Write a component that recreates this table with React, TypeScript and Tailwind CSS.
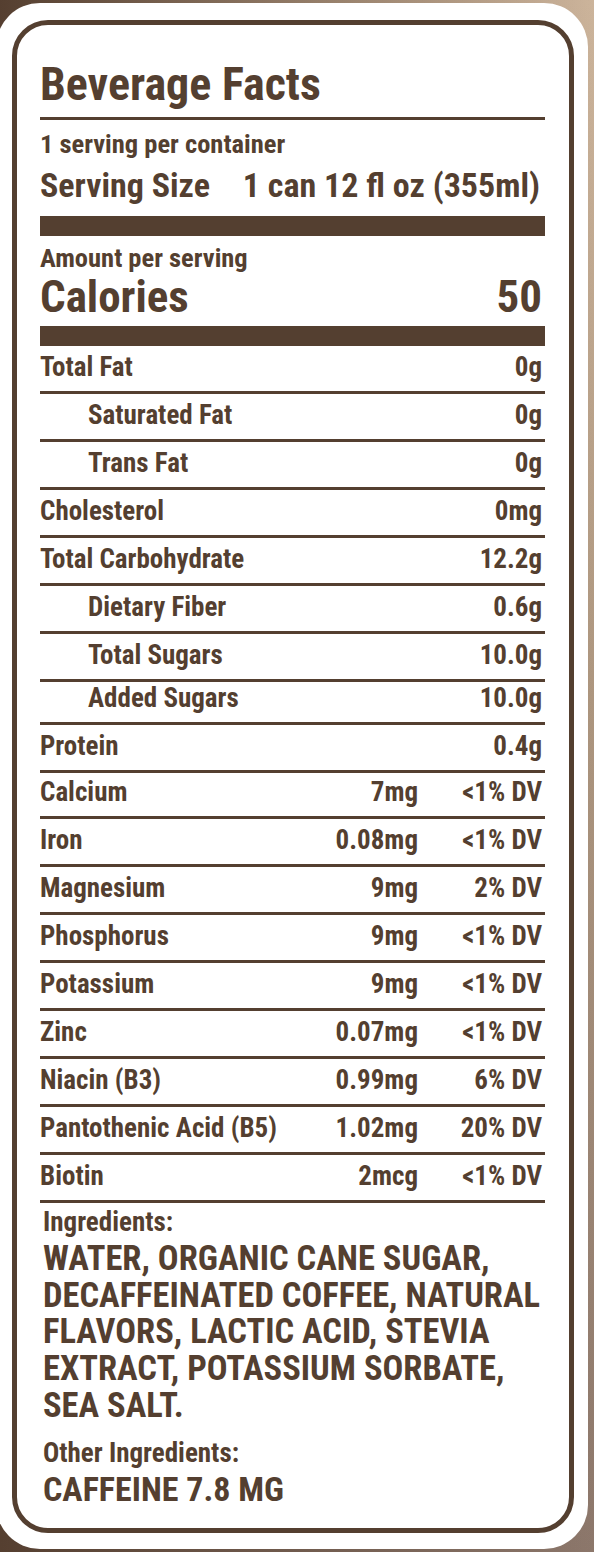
type Row = { label: string; value: string; dv?: string; indent?: boolean; h: string }

const rows: Row[] = [
  { label: 'Total Fat', value: '0g', h: 'h-[48px]' },
  { label: 'Saturated Fat', value: '0g', indent: true, h: 'h-[48px]' },
  { label: 'Trans Fat', value: '0g', indent: true, h: 'h-[48px]' },
  { label: 'Cholesterol', value: '0mg', h: 'h-[48px]' },
  { label: 'Total Carbohydrate', value: '12.2g', h: 'h-[48px]' },
  { label: 'Dietary Fiber', value: '0.6g', indent: true, h: 'h-[48px]' },
  { label: 'Total Sugars', value: '10.0g', indent: true, h: 'h-[48px]' },
  { label: 'Added Sugars', value: '10.0g', indent: true, h: 'h-[43px]' },
  { label: 'Protein', value: '0.4g', h: 'h-[48px]' },
  { label: 'Calcium', value: '7mg', dv: '<1% DV', h: 'h-[46px]' },
  { label: 'Iron', value: '0.08mg', dv: '<1% DV', h: 'h-[48px]' },
  { label: 'Magnesium', value: '9mg', dv: '2% DV', h: 'h-[48px]' },
  { label: 'Phosphorus', value: '9mg', dv: '<1% DV', h: 'h-[48px]' },
  { label: 'Potassium', value: '9mg', dv: '<1% DV', h: 'h-[48px]' },
  { label: 'Zinc', value: '0.07mg', dv: '<1% DV', h: 'h-[48px]' },
  { label: 'Niacin (B3)', value: '0.99mg', dv: '6% DV', h: 'h-[48px]' },
  { label: 'Pantothenic Acid (B5)', value: '1.02mg', dv: '20% DV', h: 'h-[48px]' },
  { label: 'Biotin', value: '2mcg', dv: '<1% DV', h: 'h-[48px]' }
]

const ingredientLines = [
  'WATER, ORGANIC CANE SUGAR,',
  'DECAFFEINATED COFFEE, NATURAL',
  'FLAVORS, LACTIC ACID, STEVIA',
  'EXTRACT, POTASSIUM SORBATE,',
  'SEA SALT.'
]

function NutrientRow({ row }: { row: Row }) {
  return (
    <div
      className={`${row.h} flex items-end border-b-[3px] border-[#543f30] pb-[10px] pr-[3px] text-[27px] leading-[27px]`}
    >
      <span className={`flex-1 ${row.indent ? 'pl-[48px]' : ''}`}>{row.label}</span>
      <span className="text-right">{row.value}</span>
      {row.dv && <span className="w-[124px] text-right">{row.dv}</span>}
    </div>
  )
}

export default function App() {
  return (
    <div
      className="h-[1552px] overflow-hidden bg-[linear-gradient(90deg,#553f30_0%,rgba(85,63,48,0.55)_45%,rgba(85,63,48,0)_100%),linear-gradient(180deg,#ccb49b_0%,#ad967f_45%,#8c776b_100%)] pt-[3px]"
      style={{ fontFamily: '"Roboto Condensed", "Liberation Sans Narrow", "DejaVu Sans Condensed", Roboto, sans-serif' }}
    >
      <div className="-ml-1 mr-[6px] h-[1546px] rounded-[44px] bg-white pb-[16px] pl-[16px] pr-[14px] pt-[17px]">
        <div className="h-[1513px] rounded-[36px] border-[5px] border-[#543f30] pl-[23px] pr-[24px] pt-[36px] font-bold text-[#543f30]">
          <h1 className="text-[46px] leading-[46px]">Beverage Facts</h1>
          <div className="mt-[10px] h-[3px] bg-[#543f30]" />

          <p className="mt-[10px] text-[26.5px] leading-[27px]">1 serving per container</p>
          <div className="mt-[11px] flex justify-between pr-[5px] text-[34px] leading-[34px]">
            <span>Serving Size</span>
            <span>1 can 12 fl oz (355ml)</span>
          </div>
          <div className="mt-[14px] h-[20px] bg-[#543f30]" />

          <p className="mt-[8px] text-[26.5px] leading-[27px]">Amount per serving</p>
          <div className="mt-[3px] flex justify-between pr-[3px] text-[45px] leading-[46px]">
            <span>Calories</span>
            <span>50</span>
          </div>
          <div className="mt-[6px] h-[20px] bg-[#543f30]" />

          <div className="flex flex-col">
            {rows.map((row) => (
              <NutrientRow key={row.label} row={row} />
            ))}
          </div>

          <div className="pl-[3px]">
            <p className="mt-[6px] text-[27px] leading-[27px]">Ingredients:</p>
            <div className="mt-[4px] text-[34.5px] leading-[36.7px]">
              {ingredientLines.map((line) => (
                <div key={line} className="whitespace-nowrap">
                  {line}
                </div>
              ))}
            </div>
            <p className="mt-[16px] text-[27px] leading-[27px]">Other Ingredients:</p>
            <p className="mt-[5px] text-[34px] leading-[34px]">CAFFEINE 7.8 MG</p>
          </div>
        </div>
      </div>
    </div>
  )
}
